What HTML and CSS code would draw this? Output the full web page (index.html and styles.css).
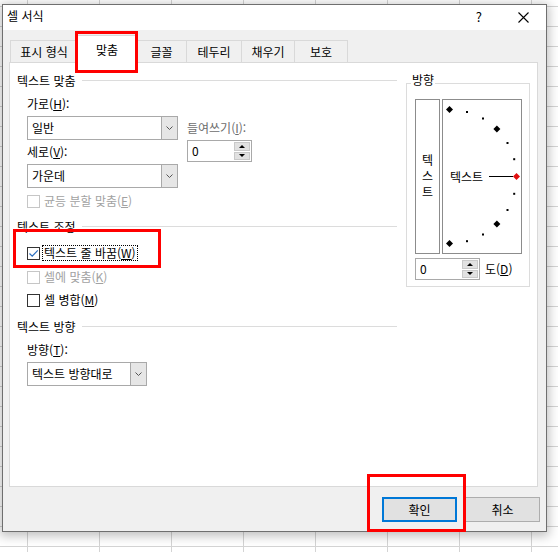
FILE: index.html
```html
<!DOCTYPE html>
<html lang="ko">
<head>
<meta charset="utf-8">
<title>셀 서식</title>
<link rel="stylesheet" href="styles.css">
</head>
<body>
<div class="dialog">
  <div class="titlebar">
    <span class="title">셀 서식</span>
    <span class="help">?</span>
    <svg class="close" width="11" height="11" viewBox="0 0 11 11"><path d="M0.5 0.5L10.5 10.5M10.5 0.5L0.5 10.5" stroke="#000" stroke-width="1.1" fill="none"/></svg>
  </div>

  <div class="tabs">
    <div class="tab">표시 형식</div>
    <div class="tab active">맞춤</div>
    <div class="tab">글꼴</div>
    <div class="tab">테두리</div>
    <div class="tab">채우기</div>
    <div class="tab">보호</div>
  </div>

  <div class="panel">
    <div class="left">
      <div class="heading"><span>텍스트 맞춤</span><i></i></div>
      <div class="align-row">
        <div class="col-main">
          <div class="label">가로(<u>H</u>):</div>
          <div class="combo combo-wide"><span class="val">일반</span><span class="drop"><svg width="7" height="4" viewBox="0 0 7 4"><path d="M0.5 0.5L3.5 3.5L6.5 0.5" stroke="#555" fill="none"/></svg></span></div>
          <div class="label label-gap">세로(<u>V</u>):</div>
          <div class="combo combo-wide"><span class="val">가운데</span><span class="drop"><svg width="7" height="4" viewBox="0 0 7 4"><path d="M0.5 0.5L3.5 3.5L6.5 0.5" stroke="#555" fill="none"/></svg></span></div>
        </div>
        <div class="col-indent">
          <div class="label muted">들여쓰기(<u>I</u>):</div>
          <div class="spin"><span class="val">0</span><span class="btns"><b><i class="up"></i></b><b><i class="down"></i></b></span></div>
        </div>
      </div>
      <div class="check check-first disabled"><span class="box"></span><span class="txt">균등 분할 맞춤(<u>E</u>)</span></div>

      <div class="heading heading-2"><span>텍스트 조정</span><i></i></div>
      <div class="check check-wrap"><span class="box checked"><svg width="11" height="11" viewBox="0 0 11 11"><path d="M1.5 5.5L4.2 8.2L9.8 2.3" stroke="#2c6fc0" stroke-width="1.2" fill="none"/></svg></span><span class="txt focus">텍스트 줄 바꿈(<u>W</u>)</span></div>
      <div class="check check-shrink disabled"><span class="box"></span><span class="txt">셀에 맞춤(<u>K</u>)</span></div>
      <div class="check check-merge"><span class="box"></span><span class="txt">셀 병합(<u>M</u>)</span></div>

      <div class="heading heading-3"><span>텍스트 방향</span><i></i></div>
      <div class="label label-dir">방향(<u>T</u>):</div>
      <div class="combo combo-dir"><span class="val">텍스트 방향대로</span><span class="drop"><svg width="7" height="4" viewBox="0 0 7 4"><path d="M0.5 0.5L3.5 3.5L6.5 0.5" stroke="#555" fill="none"/></svg></span></div>
    </div>

    <fieldset class="orient">
      <legend>방향</legend>
      <div class="orient-boxes">
        <div class="vbox"><span>텍</span><span>스</span><span>트</span></div>
        <div class="dial">
          <svg width="78" height="153" viewBox="0 0 78 153">
            <g fill="#000">
              <polygon points="6.5,6 10,9.5 6.5,13 3,9.5"/>
              <polygon points="53.9,25.6 57.4,29.1 53.9,32.6 50.4,29.1"/>
              <polygon points="53.9,120.4 57.4,123.9 53.9,127.4 50.4,123.9"/>
              <polygon points="6.5,140 10,143.5 6.5,147 3,143.5"/>
              <rect x="23" y="11" width="2" height="2"/>
              <rect x="39" y="17.5" width="2" height="2"/>
              <rect x="63.5" y="42" width="2" height="2"/>
              <rect x="70.2" y="58.2" width="2" height="2"/>
              <rect x="70.2" y="92.8" width="2" height="2"/>
              <rect x="63.5" y="109" width="2" height="2"/>
              <rect x="39" y="133.5" width="2" height="2"/>
              <rect x="23" y="140.2" width="2" height="2"/>
            </g>
            <line x1="46" y1="76.5" x2="70" y2="76.5" stroke="#000" stroke-width="1"/>
            <polygon points="73.5,73 77,76.5 73.5,80 70,76.5" fill="#e01010"/>
            <text x="7" y="76.5" class="dial-text" dominant-baseline="central">텍스트</text>
          </svg>
        </div>
      </div>
      <div class="deg-row">
        <div class="spin spin-deg"><span class="val">0</span><span class="btns"><b><i class="up"></i></b><b><i class="down"></i></b></span></div>
        <span class="deg-label">도(<u>D</u>)</span>
      </div>
    </fieldset>
  </div>

  <div class="buttons">
    <div class="btn btn-default">확인</div>
    <div class="btn">취소</div>
  </div>

  <div class="mark mark-tab"></div>
  <div class="mark mark-wrap"></div>
  <div class="mark mark-ok"></div>
</div>
</body>
</html>
```

FILE: styles.css
```css
* { box-sizing: border-box; }

html, body {
  margin: 0;
  padding: 0;
}

body {
  width: 558px;
  height: 552px;
  overflow: hidden;
  padding: 4px 0 0 2px;
  background-color: #ffffff;
  background-image:
    repeating-linear-gradient(to right, transparent 0 27px, #d4d4d4 27px 28px, transparent 28px 72px),
    repeating-linear-gradient(to bottom, transparent 0 6px, #d4d4d4 6px 7px, transparent 7px 20px);
  font-family: "Noto Sans CJK KR", "Noto Sans", sans-serif;
  font-size: 12px;
  color: #000;
}

.dialog {
  position: relative;
  width: 545px;
  height: 528px;
  border: 1px solid #6f6f6f;
  background: #f0f0f0;
  box-shadow: 0 2px 10px 2px rgba(0, 0, 0, 0.25);
}

/* title bar */
.titlebar {
  height: 25px;
  background: #fff;
  display: flex;
  align-items: center;
  padding-left: 4px;
}
.title {
  flex: 1;
  line-height: 16px;
  margin-top: -3px;
}
.help {
  font-size: 13px;
  line-height: 16px;
  margin-right: 36px;
  margin-top: -1px;
}
.close {
  margin-right: 17px;
  display: block;
}

/* tabs */
.tabs {
  display: flex;
  margin: 10px 0 0 7px;
  height: 22px;
}
.tab {
  height: 22px;
  border: 1px solid #d9d9d9;
  border-bottom: none;
  margin-left: -1px;
  display: flex;
  align-items: center;
  justify-content: center;
  line-height: 16px;
  padding-top: 1px;
  background: #f0f0f0;
}
.tab:first-child { margin-left: 0; width: 68px; }
.tab:nth-child(2) { width: 60px; }
.tab:nth-child(3) { width: 51px; }
.tab:nth-child(4) { width: 56px; }
.tab:nth-child(5) { width: 54px; }
.tab:nth-child(6) { width: 54px; }
.tab.active {
  background: #fff;
  height: 28px;
  margin-top: -5px;
  margin-bottom: -1px;
  position: relative;
  z-index: 1;
}

/* panel */
.panel {
  margin-left: 6px;
  width: 529px;
  height: 425px;
  border: 1px solid #d9d9d9;
  background: #fff;
  display: flex;
  align-items: flex-start;
  padding: 10px 7px 0 7px;
}

.left {
  width: 380px;
  display: flex;
  flex-direction: column;
}

.heading {
  display: flex;
  align-items: center;
  height: 16px;
  line-height: 16px;
}
.heading span { margin-right: 6px; white-space: nowrap; }
.heading i {
  flex: 1;
  height: 0;
  border-top: 1px solid #dcdcdc;
  margin-bottom: 2px;
}
.heading-2 { margin-top: 10px; }
.heading-3 { margin-top: 11px; }

.label {
  line-height: 16px;
  height: 16px;
  margin-left: 10px;
  white-space: nowrap;
}
.muted { color: #6d6d6d; }
.label-gap { margin-top: 4px; }
.label-dir { margin-top: 7px; }

.align-row {
  display: flex;
  margin-top: 7px;
}
.col-main { display: flex; flex-direction: column; }
.col-indent {
  margin-left: 9px;
  padding-top: 24px;
  display: flex;
  flex-direction: column;
}
.col-indent .label { margin-left: 0; }

/* combo boxes */
.combo {
  display: flex;
  height: 24px;
  border: 1px solid #a9a9a9;
  background: #fff;
  margin-left: 10px;
  margin-top: 4px;
}
.combo-wide { width: 151px; }
.combo-dir { width: 120px; }
.combo .val {
  flex: 1;
  padding-left: 4px;
  line-height: 22px;
  white-space: nowrap;
}
.combo .drop {
  width: 17px;
  margin: -1px -1px -1px 0;
  border: 1px solid #a9a9a9;
  background: #e6e6e6;
  display: flex;
  align-items: center;
  justify-content: center;
}
.combo .drop svg { display: block; }

/* spin boxes */
.spin {
  display: flex;
  width: 65px;
  height: 22px;
  margin-top: 4px;
  border: 1px solid #a9a9a9;
  background: #fff;
}
.spin .val {
  flex: 1;
  padding-left: 4px;
  line-height: 20px;
}
.spin .btns {
  width: 17px;
  display: flex;
  flex-direction: column;
  gap: 1px;
  padding: 1px 1px 1px 0;
}
.spin .btns b {
  flex: 1;
  background: #e1e1e1;
  border: 1px solid #c9c9c9;
  display: flex;
  align-items: center;
  justify-content: center;
}
.spin .up, .spin .down {
  width: 0;
  height: 0;
  border-left: 3px solid transparent;
  border-right: 3px solid transparent;
}
.spin .up { border-bottom: 3px solid #000; }
.spin .down { border-top: 3px solid #000; }

/* check boxes */
.check {
  display: flex;
  align-items: center;
  height: 16px;
  margin-left: 10px;
  line-height: 16px;
}
.check .box {
  width: 13px;
  height: 13px;
  border: 1px solid #333;
  background: #fff;
  margin-right: 4px;
  display: flex;
  align-items: center;
  justify-content: center;
  flex: none;
}
.check.disabled .box { border-color: #c6c6c6; }
.check.disabled .txt { color: #a2a2a2; }
.check .box svg { display: block; }
.check .focus {
  outline: 1px dotted #000;
  padding: 0 1px;
  margin-left: -1px;
  line-height: 14px;
}
.check-first { margin-top: 5px; }
.check-wrap { margin-top: 10px; }
.check-shrink { margin-top: 8px; }
.check-merge { margin-top: 7px; }

/* orientation group */
.orient {
  margin: -1px 0 0 9px;
  width: 124px;
  height: 215px;
  border: 1px solid #dcdcdc;
  padding: 5px 7px 6px 8px;
  min-width: 0;
}
.orient legend {
  padding: 0 1px;
  margin-left: -4px;
  line-height: 16px;
  padding-bottom: 6px;
}
.orient-boxes {
  display: flex;
  gap: 2px;
  height: 155px;
}
.vbox {
  width: 25px;
  border: 1px solid #8c8c8c;
  display: flex;
  flex-direction: column;
  align-items: center;
  justify-content: center;
  padding-bottom: 1px;
}
.vbox span { line-height: 16px; height: 16px; }
.dial {
  width: 80px;
  border: 1px solid #8c8c8c;
}
.dial svg { display: block; }
.dial-text {
  font-family: "Noto Sans CJK KR", "Noto Sans", sans-serif;
  font-size: 12px;
  fill: #000;
}
.deg-row {
  display: flex;
  align-items: center;
  margin-top: 4px;
}
.spin-deg { margin-top: 0; }
.deg-label { margin-left: 5px; line-height: 16px; }

/* buttons */
.buttons {
  display: flex;
  justify-content: flex-end;
  gap: 8px;
  margin-top: 10px;
  padding-right: 6px;
}
.btn {
  width: 75px;
  height: 25px;
  border: 1px solid #adadad;
  background: #e1e1e1;
  display: flex;
  align-items: center;
  justify-content: center;
  line-height: 16px;
}
.btn-default { border: 2px solid #0078d7; }

/* red annotation boxes */
.mark {
  position: absolute;
  border: 3px solid #ff0000;
  z-index: 5;
  pointer-events: none;
}
.mark-tab { left: 72px; top: 26px; width: 63px; height: 42px; }
.mark-wrap { left: 10px; top: 224px; width: 148px; height: 39px; }
.mark-ok { left: 364px; top: 469px; width: 99px; height: 58px; }
```
